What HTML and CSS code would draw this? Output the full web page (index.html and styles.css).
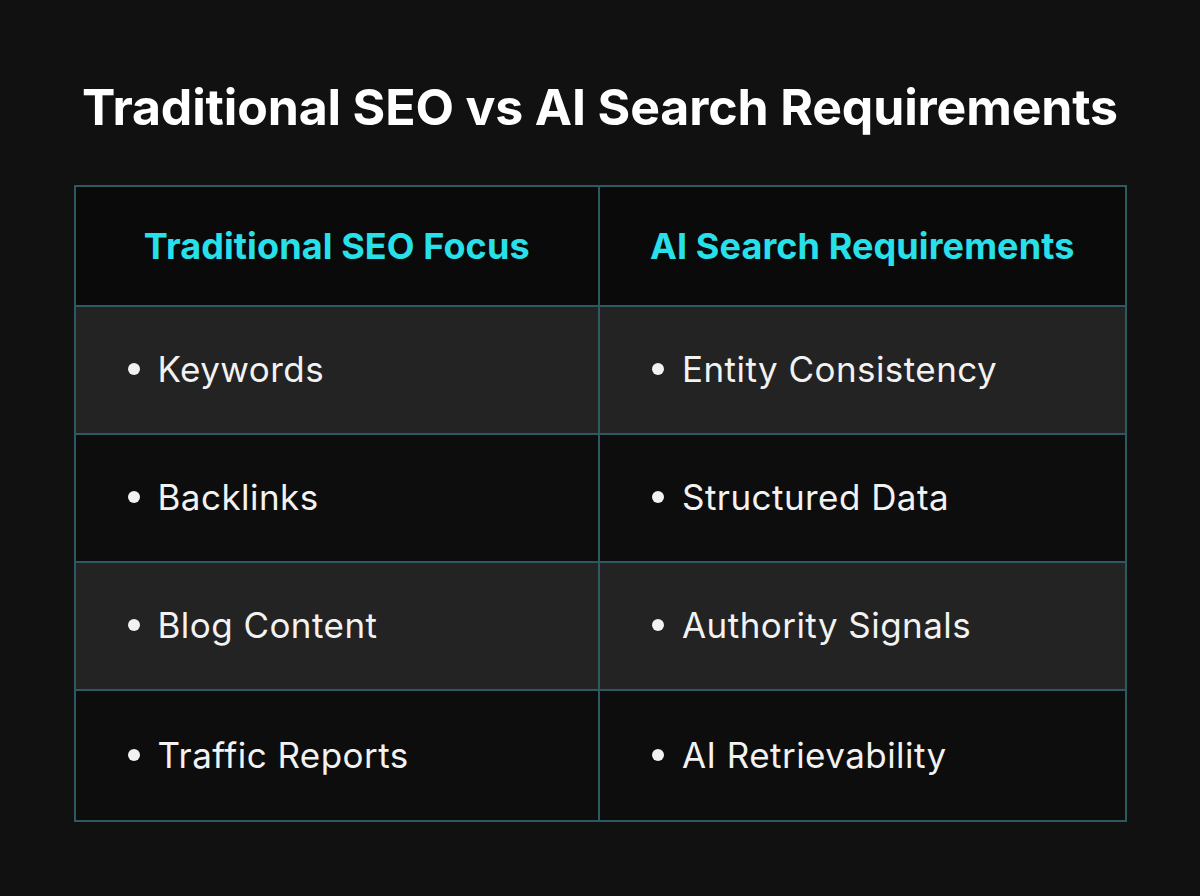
FILE: index.html
```html
<!DOCTYPE html>
<html>
<head>
<meta charset="utf-8">
<link rel="stylesheet" href="styles.css">
</head>
<body>
<main class="page">
  <h1 class="title">Traditional SEO vs AI Search Requirements</h1>
  <div class="table">
    <div class="cell head">Traditional SEO Focus</div>
    <div class="cell head">AI Search Requirements</div>
    <div class="cell shade"><span class="dot"></span>Keywords</div>
    <div class="cell shade"><span class="dot"></span>Entity Consistency</div>
    <div class="cell"><span class="dot"></span>Backlinks</div>
    <div class="cell"><span class="dot"></span>Structured Data</div>
    <div class="cell shade"><span class="dot"></span>Blog Content</div>
    <div class="cell shade"><span class="dot"></span>Authority Signals</div>
    <div class="cell"><span class="dot"></span>Traffic Reports</div>
    <div class="cell"><span class="dot"></span>AI Retrievability</div>
  </div>
</main>
</body>
</html>
```
FILE: styles.css
```css
html, body {
  margin: 0;
  padding: 0;
  background: #111111;
}
.page {
  width: 1200px;
  height: 896px;
  box-sizing: border-box;
  padding-top: 76px;
  display: flex;
  flex-direction: column;
  align-items: center;
  font-family: Inter, "Noto Sans", sans-serif;
}
.title {
  margin: 0;
  color: #ffffff;
  font-size: 50px;
  font-weight: 700;
  line-height: 62px;
  letter-spacing: -0.15px;
}
.table {
  margin-top: 47px;
  width: 1053px;
  display: grid;
  grid-template-columns: 1fr 1fr;
  grid-template-rows: 120px 128px 128px 128px 129px;
  border: 2px solid #2d5a60;
  box-sizing: border-box;
  background: #0c0c0c;
}
.cell {
  display: flex;
  align-items: center;
  padding-left: 52px;
  padding-bottom: 2px;
  color: #f2f2f2;
  font-size: 35px;
  font-weight: 400;
  letter-spacing: 0.45px;
  border-bottom: 2px solid #2d5a60;
  background: #0d0d0d;
}
.cell:nth-child(odd) {
  border-right: 2px solid #2d5a60;
}
.cell:nth-last-child(-n+2) {
  border-bottom: none;
}
.cell.head {
  justify-content: center;
  padding-left: 0;
  padding-bottom: 0;
  color: #28e0ea;
  font-weight: 700;
  font-size: 36px;
  letter-spacing: 0.1px;
  background: #0a0a0a;
}
.cell.shade {
  background: #232323;
}
.dot {
  width: 12px;
  height: 12px;
  border-radius: 50%;
  background: #f2f2f2;
  margin-right: 18px;
  flex: none;
}
```
